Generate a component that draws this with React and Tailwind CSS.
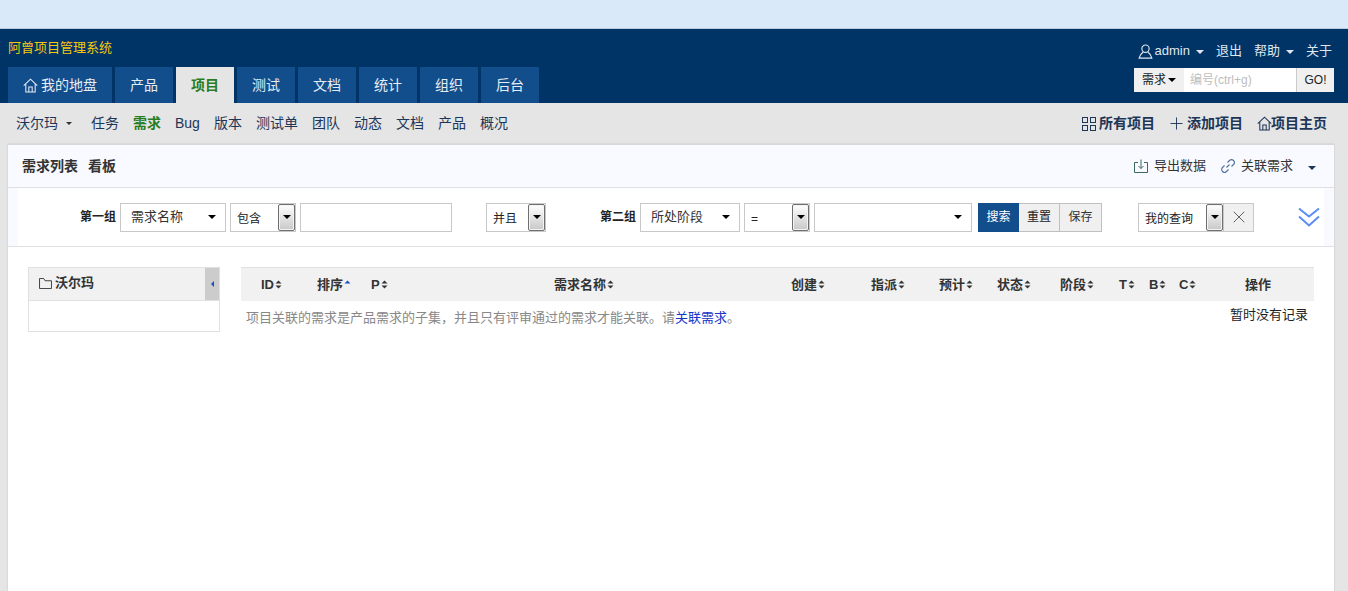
import React from 'react';
import { X } from 'lucide-react';

function Caret({ className = 'border-x-[4px] border-t-[4px] border-t-black' }) {
  return <span className={`inline-block w-0 h-0 border-x-transparent ${className}`} />;
}

function Sort({ up }) {
  return (
    <svg width="7" height="9" viewBox="0 0 7 9" className="inline-block ml-px shrink-0">
      <path d="M3.5 0.5 L6.5 3.5 H0.5 Z" fill={up ? '#1a4fc4' : '#333'} />
      {!up && <path d="M3.5 8.5 L6.5 5.5 H0.5 Z" fill="#333" />}
    </svg>
  );
}

function HomeIcon({ className }) {
  return (
    <svg viewBox="0 0 16 16" fill="none" stroke="currentColor" strokeWidth="1.1" className={className}>
      <path d="M0.8 8.2 L8 1.2 L15.2 8.2" />
      <path d="M3 6.5 V15 H13 V6.5" />
      <path d="M6.2 15 V9.5 H9.8 V15" />
    </svg>
  );
}

function NativeArrow() {
  return (
    <span className="w-[17px] h-[27px] shrink-0 flex items-center justify-center border border-[#6f6f6f] rounded-[2px] shadow-[inset_0_0_0_1px_#f4f4f4] bg-gradient-to-b from-white to-[#c8c8c8]">
      <Caret />
    </span>
  );
}

function Chosen({ label, width }) {
  return (
    <div className={`${width} h-[29px] shrink-0 flex items-center justify-between pl-[10px] pr-[9px] bg-white border border-[#c8c8c8] text-[13px] text-[#333]`}>
      <span>{label}</span>
      <Caret />
    </div>
  );
}

function NativeSelect({ label, width }) {
  return (
    <div className={`${width} h-[29px] shrink-0 flex items-center justify-between pl-[6px] bg-white border border-[#c8c8c8] text-[12px] text-[#222]`}>
      <span className="pt-[3px]">{label}</span>
      <NativeArrow />
    </div>
  );
}

const columns = [
  ['ID', 'w-[76px] pl-5'],
  ['排序', 'w-[54px]', true],
  ['P', 'w-[183px]'],
  ['需求名称', 'w-[237px]'],
  ['创建', 'w-[80px]'],
  ['指派', 'w-[68px]'],
  ['预计', 'w-[58px]'],
  ['状态', 'w-[63px]'],
  ['阶段', 'w-[59px]'],
  ['T', 'w-[30px]'],
  ['B', 'w-[30px]'],
  ['C', 'w-[66px]'],
];

const tabs = ['产品', '项目', '测试', '文档', '统计', '组织', '后台'];
const subNav = ['任务', '需求', 'Bug', '版本', '测试单', '团队', '动态', '文档', '产品', '概况'];

export default function App() {
  return (
    <div className="h-[591px] overflow-hidden bg-[#e5e5e5] font-['Liberation_Sans','Noto_Sans_CJK_SC',sans-serif]">
      <div className="h-[29px] bg-[#d9e9f9] border-b border-[#b9cbdc]" />

      <header className="h-[74px] bg-[#003366] relative">
        <div className="flex justify-between pl-2 pr-[16px] pt-[11px] h-[38px]">
          <span className="text-[13px] leading-4 text-[#f6c90e]">阿曾项目管理系统</span>
          <div className="flex items-center h-[20px] mt-[1px] text-[13px] text-[#dfe8f2]">
            <svg viewBox="0 0 16 16" fill="none" stroke="currentColor" strokeWidth="1.2" className="w-[15px] h-[15px] mr-[2px]">
              <circle cx="8" cy="5" r="3.9" />
              <path d="M5.5 8.5 C3.5 10 2 12 1.2 15 H14.8 C14 12 12.5 10 10.5 8.5" />
            </svg>
            <span>admin</span>
            <span className="ml-[6px] mb-[2px]"><Caret className="border-x-[4px] border-t-[4px] border-t-[#dfe8f2]" /></span>
            <span className="ml-[12px]">退出</span>
            <span className="ml-[12px]">帮助</span>
            <span className="ml-[6px] mb-[2px]"><Caret className="border-x-[4px] border-t-[4px] border-t-[#dfe8f2]" /></span>
            <span className="ml-[12px]">关于</span>
          </div>
        </div>
        <div className="flex justify-between items-start pl-2 pr-[14px]">
          <nav className="flex gap-[3px] h-[36px]">
            <div className="w-[104px] flex items-center justify-center gap-[3px] bg-[#134e8c] text-[14px] text-[#e6edf5]">
              <HomeIcon className="w-[15px] h-[15px]" />
              我的地盘
            </div>
            {tabs.map((t) => (
              <div
                key={t}
                className={`w-[58px] flex items-center justify-center text-[14px] ${
                  t === '项目' ? 'bg-[#e5e5e5] text-[#2a7d1e] font-bold' : 'bg-[#134e8c] text-[#e6edf5]'
                }`}
              >
                {t}
              </div>
            ))}
          </nav>
          <div className="flex h-[24px] w-[200px] mt-[1px] text-[12px]">
            <div className="w-[50px] flex items-center justify-center gap-[2px] bg-[#f0f0f0] text-[#222]">
              需求
              <Caret />
            </div>
            <div className="flex-1 flex items-center pl-[6px] bg-white text-[#bdbdbd] border-r border-[#ccc]">编号(ctrl+g)</div>
            <div className="w-[37px] flex items-center justify-center bg-[#f0f0f0] text-[#222]">GO!</div>
          </div>
        </div>
      </header>

      <div className="h-[41px] flex items-center justify-between pl-4 pr-[21px] text-[14px] text-[#1d3557]">
        <div className="flex items-center">
          <span>沃尔玛</span>
          <span className="ml-[8px] mr-[19px] mb-[1px] flex"><Caret className="border-x-[3px] border-t-[3px] border-t-[#333]" /></span>
          <div className="flex gap-[14px]">
            {subNav.map((n) => (
              <span key={n} className={n === '需求' ? 'text-[#2a7d1e] font-bold' : ''}>{n}</span>
            ))}
          </div>
        </div>
        <div className="flex items-center font-bold">
          <svg viewBox="0 0 14 14" fill="none" stroke="currentColor" strokeWidth="1" className="w-[14px] h-[14px] mr-[3px]">
            <rect x="0.5" y="0.5" width="5" height="5" />
            <rect x="8.5" y="0.5" width="5" height="5" />
            <rect x="0.5" y="8.5" width="5" height="5" />
            <rect x="8.5" y="8.5" width="5" height="5" />
          </svg>
          <span>所有项目</span>
          <svg viewBox="0 0 14 14" fill="none" stroke="currentColor" strokeWidth="1" className="w-[13px] h-[13px] ml-[15px] mr-[4px]">
            <path d="M7 0.5 V13.5 M0.5 7 H13.5" />
          </svg>
          <span>添加项目</span>
          <HomeIcon className="w-[15px] h-[15px] ml-[14px] -mr-[1px]" />
          <span>项目主页</span>
        </div>
      </div>

      <main className="mx-2 mr-[14px] h-[448px] bg-white border-t border-[#d8d8d8] shadow-[0_0_2px_rgba(0,0,0,0.15)]">
        <div className="h-[43px] flex items-center justify-between pl-[14px] pr-[18px] bg-[#f8faff] border-b border-[#e0e0e0] text-[13px] text-[#333]">
          <div className="flex gap-[10px] font-bold text-[14px]">
            <span>需求列表</span>
            <span>看板</span>
          </div>
          <div className="flex items-center">
            <svg viewBox="0 0 14 14" fill="none" stroke="#3a6b5a" strokeWidth="1" className="w-[14px] h-[14px] mr-[6px]">
              <path d="M4 3.5 H0.5 V13.5 H13.5 V3.5 H10" />
              <path d="M7 0.5 V9.5 M4.5 7 L7 9.5 L9.5 7" />
            </svg>
            <span>导出数据</span>
            <svg viewBox="0 0 14 14" fill="none" stroke="#50729c" strokeWidth="1.1" className="w-[14px] h-[14px] ml-[15px] mr-[6px]">
              <path d="M5.5 8.5 L8.5 5.5" />
              <path d="M6.5 3.5 L8.5 1.5 A2.8 2.8 0 0 1 12.5 5.5 L10.5 7.5" />
              <path d="M7.5 10.5 L5.5 12.5 A2.8 2.8 0 0 1 1.5 8.5 L3.5 6.5" />
            </svg>
            <span>关联需求</span>
            <span className="ml-[15px] mb-[1px]"><Caret className="border-x-[4px] border-t-[4px] border-t-[#1d3557]" /></span>
          </div>
        </div>

        <div className="px-[10px] bg-[#f8faff]">
          <div className="h-[58px] flex items-center bg-white">
            <span className="ml-[62px] mr-1 text-[12px] font-bold text-[#222]">第一组</span>
            <Chosen label="需求名称" width="w-[106px]" />
            <div className="w-1" />
            <NativeSelect label="包含" width="w-[66px]" />
            <div className="w-1" />
            <div className="w-[152px] h-[29px] shrink-0 border border-[#c8c8c8] bg-white" />
            <div className="w-[34px]" />
            <NativeSelect label="并且" width="w-[60px]" />
            <span className="ml-[54px] mr-1 text-[12px] font-bold text-[#222]">第二组</span>
            <Chosen label="所处阶段" width="w-[100px]" />
            <div className="w-1" />
            <NativeSelect label="=" width="w-[66px]" />
            <div className="w-1" />
            <Chosen label="" width="w-[158px]" />
            <div className="w-[6px]" />
            <div className="flex h-[29px] text-[12px]">
              <span className="w-[41px] flex items-center justify-center bg-[#134e8c] text-white">搜索</span>
              <span className="w-[41px] flex items-center justify-center bg-[#f0f0f0] border-y border-r border-[#c0c0c0] text-[#222]">重置</span>
              <span className="w-[42px] flex items-center justify-center bg-[#f0f0f0] border-y border-r border-[#c0c0c0] text-[#333]">保存</span>
            </div>
            <div className="w-9" />
            <NativeSelect label="我的查询" width="w-[86px]" />
            <span className="w-[30px] h-[29px] flex items-center justify-center bg-[#f0f0f0] border-y border-r border-[#c8c8c8] text-[#444]">
              <X size={20} strokeWidth={1} />
            </span>
            <svg viewBox="0 0 22 20" fill="none" stroke="#5b8cf5" strokeWidth="2" className="w-[22px] h-[20px] ml-[44px]">
              <path d="M1 1.5 L11 9.5 L21 1.5" />
              <path d="M1 9.5 L11 18.5 L21 9.5" />
            </svg>
          </div>
        </div>

        <div className="border-t border-[#e0e0e0] flex pt-5 pl-5 pr-5">
          <aside className="w-[192px] h-[65px] shrink-0 border border-[#e0e0e0]">
            <div className="h-[33px] flex items-center justify-between pl-[10px] bg-[#f1f1f1] border-b border-[#e0e0e0] text-[13px] font-bold text-[#333]">
              <div className="flex items-center gap-[3px] pb-[2px]">
                <svg viewBox="0 0 14 12" fill="none" stroke="#333" strokeWidth="1" className="w-[13px] h-[11px]">
                  <path d="M0.5 11.5 V0.5 H5 L6.5 3 H13.5 V11.5 Z" />
                </svg>
                沃尔玛
              </div>
              <span className="w-[14px] h-full flex items-center justify-center bg-[#cccccc]">
                <span className="w-0 h-0 border-y-[3px] border-y-transparent border-r-[3px] border-r-[#1a4fc4]" />
              </span>
            </div>
          </aside>
          <section className="ml-[21px] flex-1">
            <div className="h-[34px] flex items-center bg-[#f1f1f1] border-t border-[#e0e0e0] text-[13px] font-bold text-[#333]">
              {columns.map(([name, w, up]) => (
                <div key={name} className={`${w} shrink-0 flex items-center`}>
                  <span>{name}</span>
                  <Sort up={up} />
                </div>
              ))}
              <div>操作</div>
            </div>
            <div className="flex justify-between pl-[5px] pr-[6px] text-[13px]">
              <p className="pt-[7px] text-[#888]">
                项目关联的需求是产品需求的子集，并且只有评审通过的需求才能关联。请<span className="text-[#1a35c8]">关联需求</span>。
              </p>
              <p className="pt-[4px] text-[#222]">暂时没有记录</p>
            </div>
          </section>
        </div>
      </main>
    </div>
  );
}
